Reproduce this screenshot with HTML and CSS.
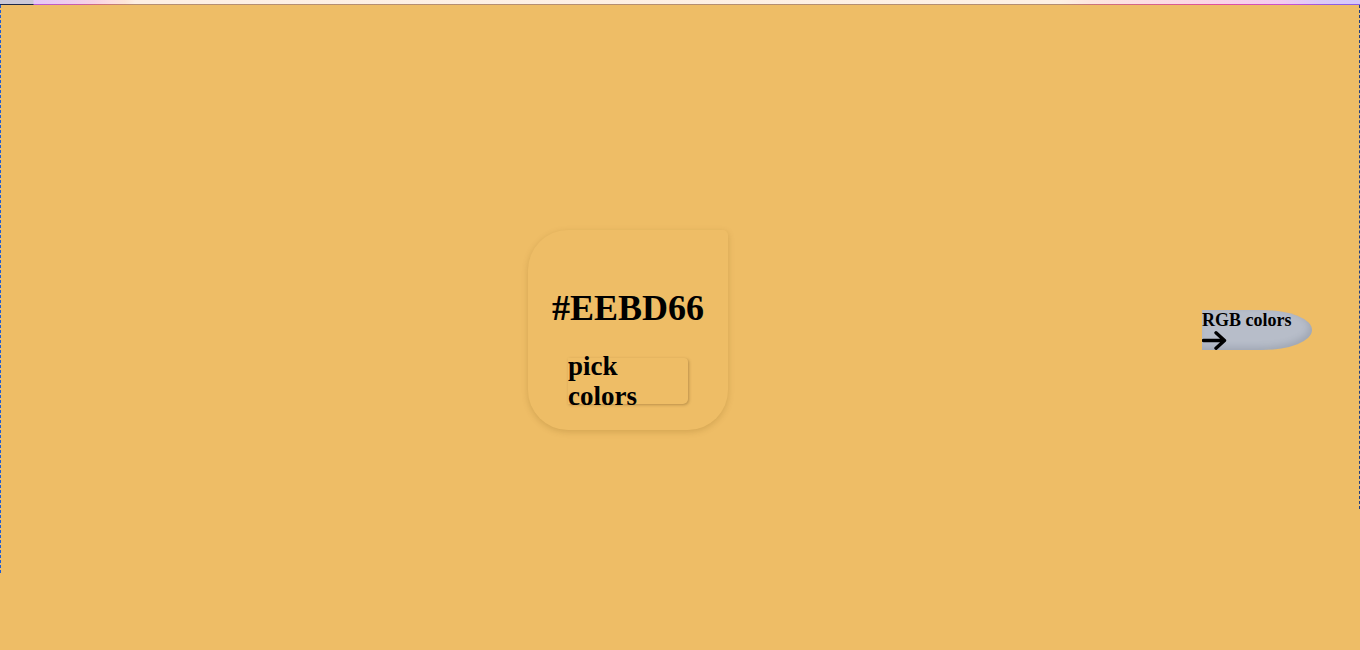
FILE: index.html
```html
<!DOCTYPE html>
<html lang="en">
<head>
<meta charset="utf-8">
<title>Color picker</title>
<link rel="stylesheet" href="styles.css">
</head>
<body>
<div class="topbar"></div>
<div class="topline"></div>
<main class="stage">
  <div class="edge edge-left"></div>
  <section class="card">
    <h1 class="hex">#EEBD66</h1>
    <button class="pick" type="button"><span class="pick-text">pick colors</span></button>
  </section>
  <a class="rgb-link" href="#">
    <span class="rgb-label">RGB colors</span>
    <svg class="rgb-arrow" width="25" height="19" viewBox="0 0 25 19" aria-hidden="true">
      <path d="M1.5 9.5 H22 M14 1.8 L22.5 9.5 L14 17.2" fill="none" stroke="#000" stroke-width="3.4" stroke-linecap="round" stroke-linejoin="round"/>
    </svg>
  </a>
  <div class="edge edge-right"></div>
</main>
</body>
</html>
```

FILE: styles.css
```css
html, body {
  margin: 0;
  padding: 0;
}

body {
  background: #eebd66;
  font-family: "Liberation Serif", "Times New Roman", serif;
  overflow: hidden;
  height: 650px;
}

.topbar {
  height: 4px;
  background: linear-gradient(to right,
    #cbc8d6 0, #cbc8d6 33px,
    #e6c7f6 34px, #efcdee 70px, #f8d3e4 95px,
    #fddde0 110px, #fde5d8 125px, #fdefe3 135px,
    #fdf0e4 1060px, #fde6e0 1090px, #fbd6e6 1200px,
    #f4cbef 1280px, #dccaf8 1320px, #d6c8fa 1360px);
}

.topline {
  height: 1px;
  background: linear-gradient(to right,
    #1e2846 0, #1e2846 33px,
    #b85bd6 34px, #cb5ea8 80px, #d0727a 100px,
    #b68f72 135px, #b48e72 1060px, #cf6f7c 1100px,
    #e14f9c 1220px, #c752d2 1290px, #8c5fe6 1335px, #8c5fe6 1360px);
}

.stage {
  display: flex;
  align-items: center;
  height: 650px;
}

.edge {
  align-self: flex-start;
  width: 0;
}

.edge-left {
  height: 568px;
  border-left: 1px dashed #1c5ad4;
}

.edge-right {
  height: 504px;
  margin-left: auto;
  border-right: 1px dashed #233f80;
}

.card {
  box-sizing: border-box;
  width: 200px;
  height: 200px;
  margin-left: 527px;
  padding-top: 57px;
  display: flex;
  flex-direction: column;
  align-items: center;
  background: #eebd66;
  border-radius: 40px 5px 40px 40px;
  box-shadow: 0 2px 6px rgba(120, 80, 20, 0.22);
}

.hex {
  margin: 0 0 29px;
  font-size: 36px;
  font-weight: bold;
  line-height: normal;
  color: #000;
}

.pick {
  width: 120px;
  height: 46px;
  padding: 0;
  border: none;
  border-radius: 0 4px 5px 0;
  background: #eebd66;
  box-shadow: 1px 1px 3px rgba(90, 60, 20, 0.35);
  font-family: "Liberation Serif", "Times New Roman", serif;
  font-size: 27px;
  font-weight: bold;
  line-height: 30px;
  text-align: left;
  color: #000;
  display: flex;
  align-items: center;
}

.pick-text {
  display: block;
  width: 100%;
}

.rgb-link {
  box-sizing: border-box;
  width: 110px;
  height: 40px;
  margin-left: 474px;
  display: flex;
  flex-direction: column;
  align-items: flex-start;
  background: #b7bdc9;
  border-radius: 0 50px 50px 0 / 0 20px 20px 0;
  box-shadow: inset -3px -3px 6px rgba(60, 70, 90, 0.18);
  text-decoration: none;
  color: #000;
}

.rgb-label {
  font-size: 18px;
  font-weight: bold;
  line-height: 20px;
}

.rgb-arrow {
  display: block;
  margin-top: 1px;
}
```
